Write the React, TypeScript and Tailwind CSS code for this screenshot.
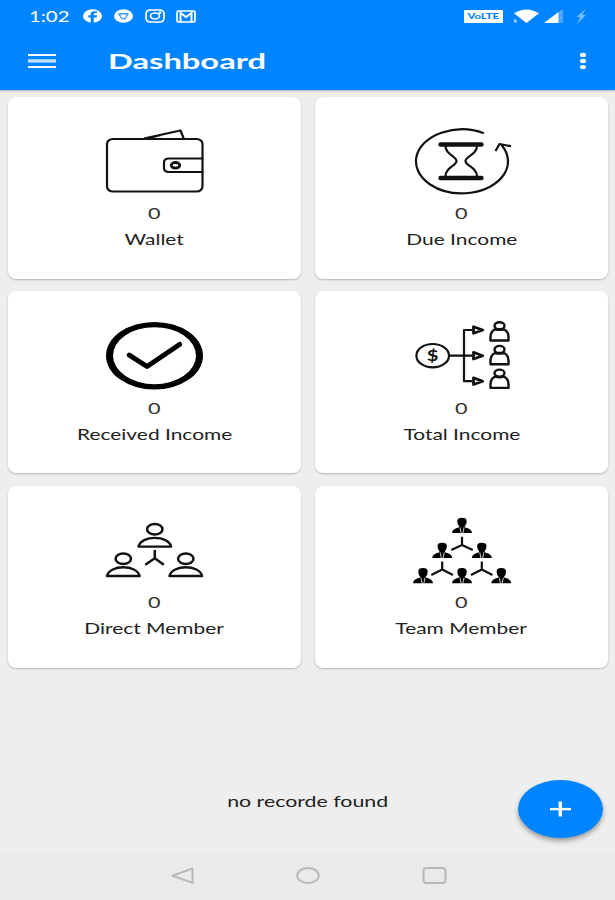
import type { ReactNode } from 'react';

interface Tile {
  label: string;
  value: number;
  icon: ReactNode;
}

const tiles: Tile[] = [
  { label: 'Wallet', value: 0, icon: <WalletIcon /> },
  { label: 'Due Income', value: 0, icon: <HourglassIcon /> },
  { label: 'Received Income', value: 0, icon: <CheckIcon /> },
  { label: 'Total Income', value: 0, icon: <IncomeTreeIcon /> },
  { label: 'Direct Member', value: 0, icon: <DirectMemberIcon /> },
  { label: 'Team Member', value: 0, icon: <TeamIcon /> },
];

export default function App() {
  return (
    <div className="relative flex h-[900px] w-[615px] flex-col overflow-hidden bg-[#eeeeee] font-['Lato',sans-serif] text-[#222]">
      <header className="h-[90px] shrink-0 bg-[#0084ff] text-white shadow-[0_1px_2px_rgba(0,0,0,0.25)]">
        <StatusBar />
        <div className="flex h-[58px] items-center pl-7 pr-[28px]">
          <svg width="29" height="16" viewBox="0 0 29 16" fill="currentColor">
            <rect y="1" width="28" height="2" />
            <rect y="6.2" width="28" height="3.4" opacity="0.75" />
            <rect y="13" width="28" height="2" />
          </svg>
          <h1 className="ml-[51px] origin-left scale-x-[1.52] pt-[2px] text-[21.5px] font-bold leading-none">Dashboard</h1>
          <svg className="ml-auto" width="8" height="20" viewBox="0 0 8 20" fill="currentColor">
            <ellipse cx="4" cy="3.9" rx="3" ry="2.2" />
            <ellipse cx="4" cy="10" rx="3" ry="2.2" />
            <ellipse cx="4" cy="16.1" rx="3" ry="2.2" />
          </svg>
        </div>
      </header>

      <main className="grid grid-cols-2 gap-x-[14px] gap-y-[12.5px] px-[7.5px] pt-[6.5px]">
        {tiles.map((tile) => (
          <TileCard key={tile.label} tile={tile} />
        ))}
      </main>

      <p className="mt-[123px] text-center text-[15px] leading-5">
        <span className="inline-block scale-x-[1.42]">no recorde found</span>
      </p>

      <button
        aria-label="Add"
        className="absolute left-[518px] top-[780px] flex h-[58px] w-[85px] items-center justify-center rounded-[50%] bg-[#0084ff] text-white shadow-[0_3px_5px_rgba(0,0,0,0.35)]"
      >
        <svg width="22" height="16" viewBox="0 0 22 16" fill="currentColor">
          <rect x="0" y="6.9" width="21" height="2.4" />
          <rect x="8.6" y="0.5" width="3.4" height="15" />
        </svg>
      </button>

      <nav className="mt-auto flex h-12 items-center justify-between bg-[#eaeaea] pl-[170px] pr-[168px] text-[#b8b8b8]">
        <svg width="24" height="18" viewBox="0 0 24 18" fill="none" stroke="currentColor" strokeWidth="2" strokeLinejoin="round">
          <path d="M2.5 8.7 L22.5 1.5 V15.9 Z" />
        </svg>
        <svg width="26" height="18" viewBox="0 0 26 18" fill="none" stroke="currentColor" strokeWidth="2">
          <ellipse cx="13" cy="8.5" rx="10.8" ry="7.5" />
        </svg>
        <svg width="26" height="18" viewBox="0 0 26 18" fill="none" stroke="currentColor" strokeWidth="2">
          <rect x="2.5" y="1" width="22" height="15" rx="3" />
        </svg>
      </nav>
    </div>
  );
}

function StatusBar() {
  return (
    <div className="flex h-8 items-center pl-[29px] pr-[28px]">
      <span className="w-[54px] whitespace-nowrap text-base leading-none">
        <span className="inline-block origin-left scale-x-[1.27]">1:02</span>
      </span>
      <svg width="19" height="14" viewBox="0 0 19 14">
        <ellipse cx="9.5" cy="7" rx="9.5" ry="6.8" fill="#fff" />
        <path d="M10.8 14 V8.5 H13.5 L14 6.3 H10.8 V5.2 Q10.8 4.1 12.5 4.1 H14 V2.3 Q7.7 1.5 7.7 5 V6.3 H5.3 V8.5 H7.7 V14 Z" fill="#0084ff" />
      </svg>
      <svg className="ml-3" width="20" height="14" viewBox="0 0 20 14">
        <ellipse cx="9.5" cy="7" rx="9.5" ry="6.8" fill="#fff" />
        <path d="M4.5 4.6 H14.5 M4.5 5 L8.7 10.6 M14 5 L10 11" stroke="#0084ff" strokeWidth="0.9" fill="none" />
        <ellipse cx="9.5" cy="7" rx="3.4" ry="2.3" fill="#fff" stroke="#0084ff" strokeWidth="0.8" />
      </svg>
      <svg className="ml-[11px]" width="20" height="14" viewBox="0 0 20 14" fill="none" stroke="#fff" strokeWidth="1.7">
        <rect x="1" y="1" width="18" height="12" rx="4" />
        <ellipse cx="10" cy="7" rx="4.5" ry="3" />
        <circle cx="15" cy="3.7" r="0.5" />
      </svg>
      <svg className="ml-[11px]" width="20" height="13" viewBox="0 0 20 13" fill="none" stroke="#fff">
        <rect x="1" y="1" width="18" height="11" rx="1.5" strokeWidth="1.7" />
        <path d="M4.5 12 V3 L10 7 L15.5 3 V12" strokeWidth="2" />
      </svg>

      <span className="ml-auto flex h-[13px] w-[39px] items-center justify-center rounded-[1px] bg-white text-[8px] font-black leading-none text-[#0084ff]">
        <span className="inline-block scale-x-[1.4]">VoLTE</span>
      </span>
      <svg className="ml-[10px]" width="28" height="15" viewBox="0 0 28 15" fill="#fff">
        <path d="M1 4.2 Q13.5 -3.4 26 4.2 L13.5 14 Z" />
        <path d="M1 9.5 L4 12 V13.5 H1 Z" opacity="0.6" />
      </svg>
      <svg className="ml-[3px]" width="21" height="14" viewBox="0 0 21 14" fill="#fff">
        <path d="M0 14 L14.5 3 V14 Z" />
        <path d="M14.5 3 L19 0 V14 H14.5 Z" opacity="0.3" />
      </svg>
      <svg className="ml-[10px]" width="12" height="15" viewBox="0 0 12 15" fill="#fff" opacity="0.45">
        <path d="M10.5 0 L1.5 8 H5 L2.5 14.5 L11 6 H7.5 Z" />
      </svg>
    </div>
  );
}

function TileCard({ tile }: { tile: Tile }) {
  return (
    <div className="flex h-[182px] flex-col items-center rounded-lg bg-white pl-px pt-[28.5px] shadow-[0_1px_2px_rgba(0,0,0,0.24)]">
      {tile.icon}
      <span className="mt-2 inline-block scale-x-[1.44] text-[15px] leading-5 text-[#333]">{tile.value}</span>
      <span className="mt-[6px] inline-block scale-x-[1.395] whitespace-nowrap text-[15px] leading-5">
        {tile.label}
      </span>
    </div>
  );
}

function TileSvg({ children }: { children: ReactNode }) {
  return (
    <svg
      className="shrink-0"
      width="100"
      height="70"
      viewBox="0 0 100 70"
      fill="none"
      stroke="#111"
      strokeWidth="2.2"
      strokeLinecap="round"
      strokeLinejoin="round"
    >
      {children}
    </svg>
  );
}

function WalletIcon() {
  return (
    <TileSvg>
      <rect x="2" y="14" width="95.5" height="52.5" rx="6" ry="5" />
      <path d="M40 13.3 L75.5 5.5 L78.5 13 M44 13 L56 10" />
      <path d="M97.5 33.5 H64 Q59 33.5 59 37.5 V43 Q59 47 64 47 H97.5" />
      <ellipse cx="70.5" cy="40.3" rx="4.3" ry="2.8" strokeWidth="2.8" />
    </TileSvg>
  );
}

function HourglassIcon() {
  return (
    <TileSvg>
      <path d="M71.8 8.2 A46 32 0 1 0 89.5 20" strokeLinecap="butt" />
      <path d="M83.5 26 L87.5 19 L99 21.2" strokeLinecap="butt" />
      <path d="M28.5 19.5 H69.5 M28.5 53 H69.5" strokeWidth="4.4" />
      <path d="M33.5 21 C33.5 30 44.5 31 44.5 36 S33.5 42 33.5 51" />
      <path d="M65 21 C65 30 53.5 31 53.5 36 S65 42 65 51" />
    </TileSvg>
  );
}

function CheckIcon() {
  return (
    <TileSvg>
      <path
        d="M1 35.7 a48.5 33.8 0 1 0 97 0 a48.5 33.8 0 1 0 -97 0 Z M8 35.7 a41.5 28.5 0 1 1 83 0 a41.5 28.5 0 1 1 -83 0 Z"
        fill="#000"
        fillRule="evenodd"
        stroke="none"
      />
      <path d="M24.3 35.2 L42 46.5 L74.5 24.5" stroke="#000" strokeWidth="5" />
    </TileSvg>
  );
}

function IncomeTreeIcon() {
  return (
    <TileSvg>
      <ellipse cx="20.7" cy="35.7" rx="16.3" ry="11.7" />
      <text
        transform="translate(20.7 40.8) scale(1.35 1)"
        textAnchor="middle"
        fontSize="15"
        fontWeight="700"
        fill="#111"
        stroke="none"
      >
        $
      </text>
      <path d="M37.5 35.7 H60 M60 10 H52 V61.2 H60" strokeLinecap="butt" />
      {[10, 35.7, 61.2].map((y) => (
        <path key={y} d={`M61.5 ${y - 3.3} L70.7 ${y} L61.5 ${y + 3.3} Z`} strokeWidth="2.8" />
      ))}
      {[0, 23.7, 47.4].map((y) => (
        <g key={y} transform={`translate(87.5 ${y})`}>
          <ellipse cy="5.7" rx="5" ry="3.5" strokeWidth="2.4" />
          <path d="M-9 20.5 V17 Q-9 11.5 -4.5 9.3 Q0 10.5 4.5 9.3 Q9 11.5 9 17 V20.5 Z" strokeWidth="2.4" />
        </g>
      ))}
    </TileSvg>
  );
}

function DirectMemberIcon() {
  return (
    <TileSvg>
      {[
        [49.8, 15.3],
        [18.3, 44.7],
        [80.8, 44.7],
      ].map(([x, y]) => (
        <g key={x} transform={`translate(${x} ${y})`}>
          <ellipse rx="7.7" ry="5.3" strokeWidth="2.5" />
          <path d="M-16.3 17.3 C-14 5.7 14 5.7 16.3 17.3 Z" strokeWidth="2.4" />
        </g>
      ))}
      <path d="M49.8 36 V44.5 M40.3 50.7 L49.8 44.3 L58.8 50.7" strokeWidth="2.5" strokeLinecap="butt" />
    </TileSvg>
  );
}

function TeamIcon() {
  return (
    <TileSvg>
      {[
        [50, 3.8],
        [30.2, 28.7],
        [69.8, 28.7],
        [11, 54],
        [50, 54],
        [89.3, 54],
      ].map(([x, y]) => (
        <g key={`${x}-${y}`} transform={`translate(${x} ${y})`} stroke="none">
          <path
            d="M-4.7 3.4 Q-4.7 0 0 0 Q4.7 0 4.7 3.4 Q4.7 7 2.8 8.4 V9.5 Q9.8 11 10 15.2 H-10 Q-9.8 11 -2.8 9.5 V8.4 Q-4.7 7 -4.7 3.4 Z"
            fill="#000"
          />
          <path d="M-2 10 L-0.9 15.2 M2 10 L0.9 15.2" stroke="#fff" strokeWidth="0.8" />
        </g>
      ))}
      <path d="M50 22.7 V31 M39.3 36 L50 31 L60.8 36" strokeLinecap="butt" />
      <path d="M30.2 47.5 V55.5 M19.3 61 L30.2 55.5 L41 61" strokeLinecap="butt" />
      <path d="M69.8 47.5 V55.5 M59 61 L69.8 55.5 L80.5 61" strokeLinecap="butt" />
    </TileSvg>
  );
}
